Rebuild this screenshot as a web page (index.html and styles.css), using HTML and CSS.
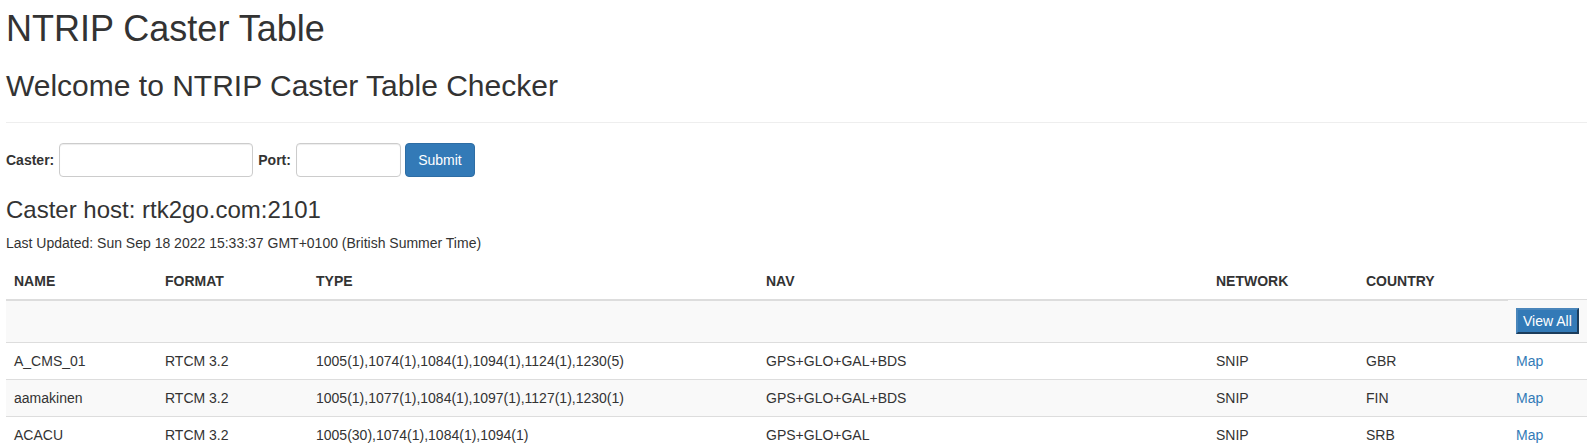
FILE: index.html
```html
<!DOCTYPE html>
<html lang="en">
<head>
<meta charset="utf-8">
<title>NTRIP Caster Table</title>
<link rel="stylesheet" href="styles.css">
</head>
<body>
<div class="page">
  <h1 class="title">NTRIP Caster Table</h1>
  <h2 class="subtitle">Welcome to NTRIP Caster Table Checker</h2>
  <hr class="rule">
  <form class="caster-form">
    <label class="field-label" for="caster">Caster:</label>
    <input class="field field-caster" id="caster" type="text">
    <label class="field-label" for="port">Port:</label>
    <input class="field field-port" id="port" type="text">
    <button class="btn-submit" type="button">Submit</button>
  </form>
  <h3 class="host">Caster host: rtk2go.com:2101</h3>
  <p class="updated">Last Updated: Sun Sep 18 2022 15:33:37 GMT+0100 (British Summer Time)</p>
  <table class="mounts">
    <colgroup>
      <col class="c-name"><col class="c-format"><col class="c-type"><col class="c-nav"><col class="c-network"><col class="c-country"><col class="c-map">
    </colgroup>
    <thead>
      <tr>
        <th>NAME</th><th>FORMAT</th><th>TYPE</th><th>NAV</th><th>NETWORK</th><th>COUNTRY</th>
      </tr>
    </thead>
    <tbody>
      <tr class="odd">
        <td></td><td></td><td></td><td></td><td></td><td></td>
        <td><button class="btn-viewall" type="button">View All</button></td>
      </tr>
      <tr>
        <td>A_CMS_01</td><td>RTCM 3.2</td><td>1005(1),1074(1),1084(1),1094(1),1124(1),1230(5)</td><td>GPS+GLO+GAL+BDS</td><td>SNIP</td><td>GBR</td><td><a class="map-link" href="#">Map</a></td>
      </tr>
      <tr class="odd">
        <td>aamakinen</td><td>RTCM 3.2</td><td>1005(1),1077(1),1084(1),1097(1),1127(1),1230(1)</td><td>GPS+GLO+GAL+BDS</td><td>SNIP</td><td>FIN</td><td><a class="map-link" href="#">Map</a></td>
      </tr>
      <tr>
        <td>ACACU</td><td>RTCM 3.2</td><td>1005(30),1074(1),1084(1),1094(1)</td><td>GPS+GLO+GAL</td><td>SNIP</td><td>SRB</td><td><a class="map-link" href="#">Map</a></td>
      </tr>
    </tbody>
  </table>
</div>
</body>
</html>
```

FILE: styles.css
```css
* { box-sizing: border-box; }
html, body { margin: 0; padding: 0; overflow: hidden; }
body {
  font-family: "Liberation Sans", Arial, Helvetica, sans-serif;
  font-size: 14px;
  line-height: 20px;
  color: #333;
  background: #fff;
}
.page { padding: 0 0 0 6px; }
.title {
  font-size: 36px;
  font-weight: 500;
  line-height: 1.1;
  margin: 9px 0 10px;
}
.subtitle {
  font-size: 30px;
  font-weight: 500;
  line-height: 1.1;
  margin: 20px 0 10px;
}
.rule {
  margin: 20px 0;
  border: 0;
  border-top: 1px solid #eee;
  height: 0;
}
.caster-form {
  display: flex;
  align-items: center;
  height: 34px;
}
.field-label {
  font-weight: 700;
  margin-right: 5px;
}
.field {
  height: 34px;
  padding: 6px 12px;
  font: inherit;
  color: #555;
  background: #fff;
  border: 1px solid #ccc;
  border-radius: 4px;
  box-shadow: inset 0 1px 1px rgba(0,0,0,.075);
  margin-right: 5px;
}
.field-caster { width: 194px; }
.field-port { width: 105px; margin-right: 4px; }
.btn-submit {
  height: 34px;
  width: 70px;
  padding: 6px 12px;
  font: inherit;
  color: #fff;
  background: #337ab7;
  border: 1px solid #2e6da4;
  border-radius: 4px;
}
.host {
  font-size: 24px;
  font-weight: 500;
  line-height: 1.1;
  margin: 20px 0 10px;
}
.updated { margin: 0 0 10px; }
.mounts {
  width: 100%;
  border-collapse: collapse;
  border-spacing: 0;
  table-layout: fixed;
}
.c-name, .c-format { width: 151px; }
.c-type, .c-nav { width: 450px; }
.c-network, .c-country { width: 150px; }
.mounts th {
  text-align: left;
  font-weight: 700;
  padding: 8px;
  line-height: 20px;
  vertical-align: bottom;
  border-bottom: 2px solid #ddd;
}
.mounts td {
  padding: 8px;
  line-height: 20px;
  vertical-align: top;
  border-top: 1px solid #ddd;
  white-space: nowrap;
}
.mounts tr.odd td { background: #f9f9f9; }
.btn-viewall {
  display: block;
  font: inherit;
  font-size: 14px;
  line-height: 18px;
  color: #fff;
  background: #337ab7;
  padding: 2px 5px;
  border: 2px solid;
  border-color: #4a86bb #1c3d5c #1c3d5c #4a86bb;
  border-radius: 0;
}
.map-link { color: #337ab7; text-decoration: none; }
```
